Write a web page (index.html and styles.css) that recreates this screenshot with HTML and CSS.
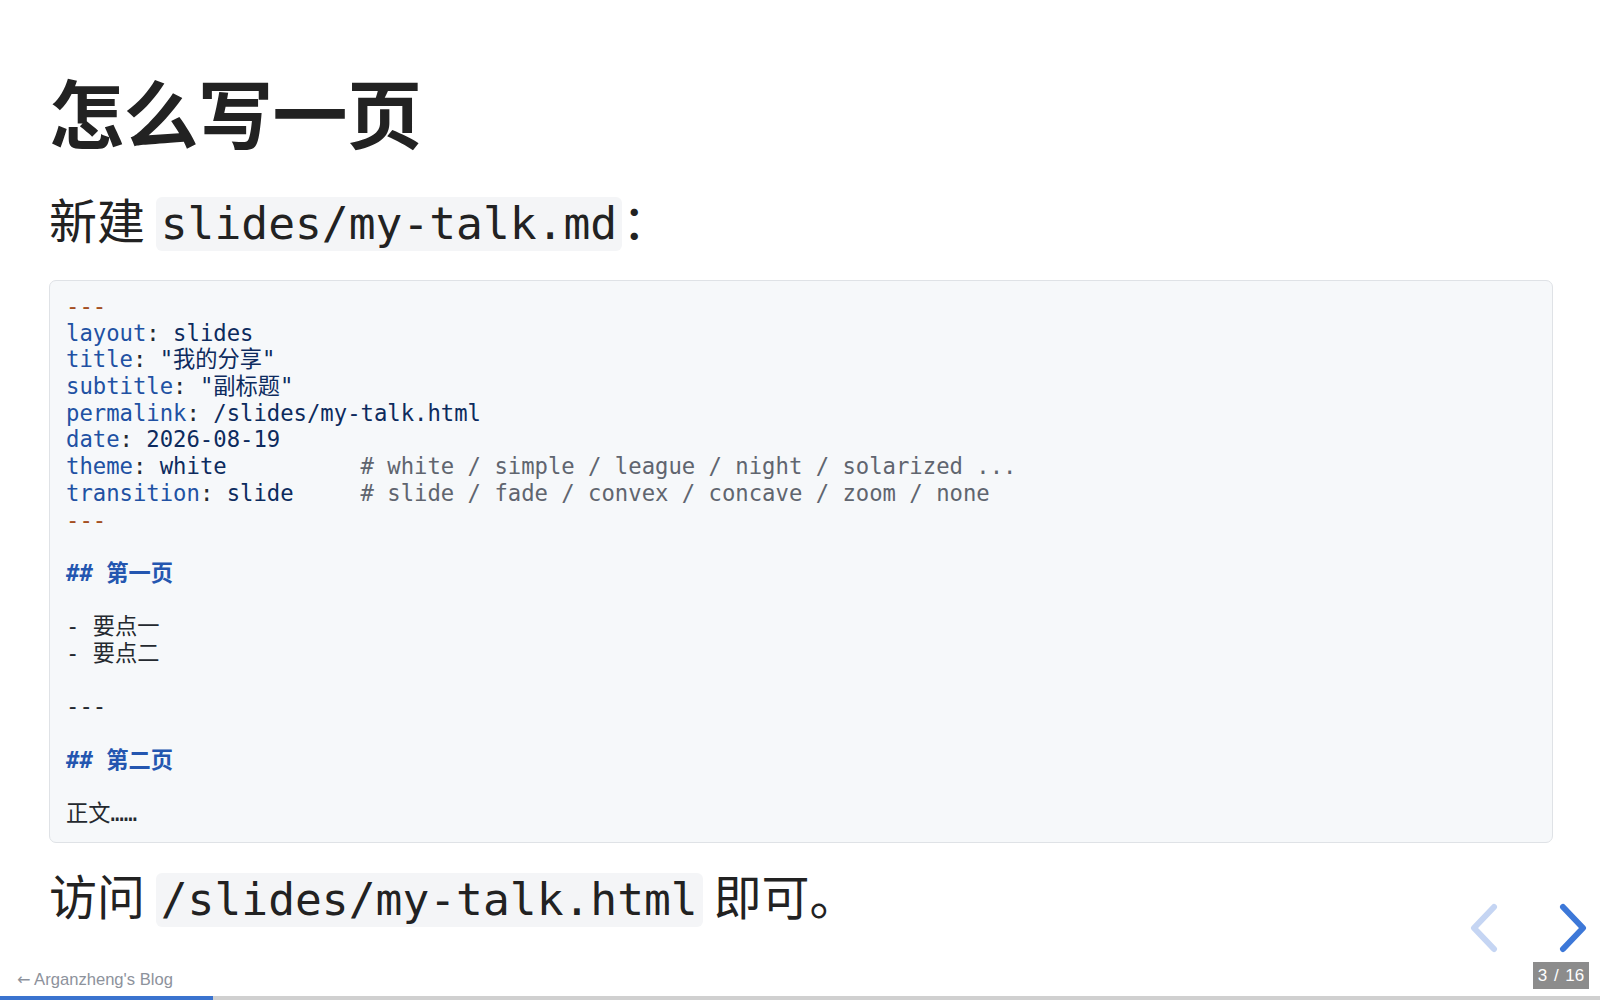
FILE: index.html
```html
<!DOCTYPE html>
<html lang="zh">
<head>
<meta charset="utf-8">
<title>怎么写一页</title>
<link rel="stylesheet" href="styles.css">
</head>
<body>
<main class="slide">
  <h1 class="title">怎么写一页</h1>
  <p class="text">新建 <code class="inline">slides/my-talk.md</code>：</p>
  <pre class="block"><span class="hr">---</span>
<span class="k">layout</span>: <span class="v">slides</span>
<span class="k">title</span>: <span class="v">"我的分享"</span>
<span class="k">subtitle</span>: <span class="v">"副标题"</span>
<span class="k">permalink</span>: <span class="v">/slides/my-talk.html</span>
<span class="k">date</span>: <span class="v">2026-08-19</span>
<span class="k">theme</span>: <span class="v">white</span>          <span class="c"># white / simple / league / night / solarized ...</span>
<span class="k">transition</span>: <span class="v">slide</span>     <span class="c"># slide / fade / convex / concave / zoom / none</span>
<span class="hr">---</span>

<span class="h">## 第一页</span>

- 要点一
- 要点二

---

<span class="h">## 第二页</span>

正文……</pre>
  <p class="text text-last">访问 <code class="inline">/slides/my-talk.html</code> 即可。</p>
</main>

<a class="back" href="#"><span class="back-arrow">←</span> Arganzheng's Blog</a>

<div class="controls">
  <svg class="arrow prev" width="36" height="50" viewBox="0 0 36 50"><path d="M28 4 L8 25 L28 46" fill="none" stroke="currentColor" stroke-width="6" stroke-linecap="round" stroke-linejoin="round"/></svg>
  <svg class="arrow next" width="36" height="50" viewBox="0 0 36 50"><path d="M8 4 L28 25 L8 46" fill="none" stroke="currentColor" stroke-width="6" stroke-linecap="round" stroke-linejoin="round"/></svg>
</div>

<div class="slide-number">3 / 16</div>

<div class="progress"><span class="progress-bar" style="width:213px"></span></div>
</body>
</html>
```

FILE: styles.css
```css
html, body {
  margin: 0;
  padding: 0;
  background: #ffffff;
  width: 1600px;
  height: 1000px;
  overflow: hidden;
}

body {
  font-family: "Noto Sans CJK SC", "Liberation Sans", sans-serif;
  color: #222222;
}

.slide {
  padding: 65px 47px 0 49px;
}

.title {
  margin: 0;
  font-size: 75px;
  line-height: 91px;
  font-weight: 700;
  color: #222222;
  letter-spacing: -0.5px;
}

.text {
  margin: 31px 0 0 0;
  font-size: 48px;
  line-height: 62px;
  color: #222222;
}

.inline {
  font-family: "DejaVu Sans Mono", monospace;
  font-size: 44.6px;
  background: #f4f5f7;
  border-radius: 6px;
  padding: 1px 5px;
  color: #222222;
}

.block {
  margin: 25px 0 0 0;
  padding: 12px 16px 15px 16px;
  background: #f6f8fa;
  border: 1px solid #dfe2e6;
  border-radius: 7px;
  font-family: "DejaVu Sans Mono", "Noto Sans CJK SC", monospace;
  font-size: 22.24px;
  line-height: 26.69px;
  color: #24292f;
  white-space: pre;
}

.text-last {
  margin-top: 20px;
}

.k { color: #2151a3; }
.v { color: #0d2b5e; }
.c { color: #60656f; }
.hr { color: #a4501f; }
.h { color: #2456b0; font-weight: 700; }

.back {
  position: absolute;
  left: 17px;
  top: 969px;
  font-family: "Liberation Sans", Arial, sans-serif;
  font-size: 16.6px;
  line-height: 22px;
  color: #8d929c;
  text-decoration: none;
}

.back-arrow {
  font-family: "DejaVu Sans", sans-serif;
  font-size: 16px;
}

.controls {
  position: absolute;
  left: 1466px;
  top: 903px;
  display: flex;
  gap: 53px;
}

.arrow { display: block; }
.prev { color: #c5d5f3; }
.next { color: #3d78d8; }

.slide-number {
  position: absolute;
  left: 1533px;
  top: 962px;
  width: 56px;
  height: 27px;
  background: #8c8c8c;
  color: #ffffff;
  font-family: "Liberation Sans", Arial, sans-serif;
  font-size: 17px;
  line-height: 27px;
  text-align: center;
  white-space: pre;
  word-spacing: 2px;
}

.progress {
  position: absolute;
  left: 0;
  bottom: 0;
  width: 1600px;
  height: 4px;
  background: #d0d0d0;
}

.progress-bar {
  display: block;
  height: 4px;
  background: #3a73cf;
}
```
